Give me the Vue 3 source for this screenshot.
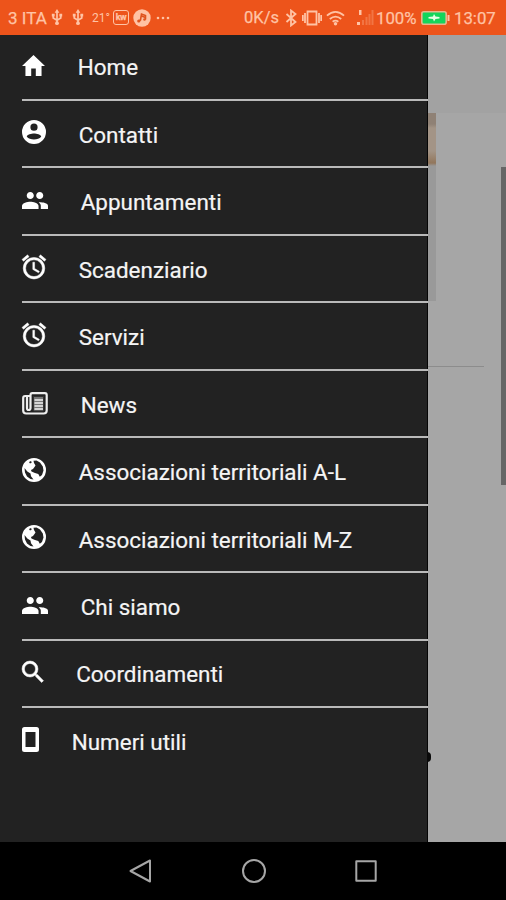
<script setup>
const icons = {
  home: { w: 23, h: 21, box: '2 3 20 17', d: 'M10 20v-6h4v6h5v-8h3L12 3 2 12h3v8z' },
  contact: { w: 24, h: 24, box: '2 2 20 20', d: 'M12 2a10 10 0 1 0 0 20 10 10 0 0 0 0-20zm0 3a3 3 0 1 1 0 6 3 3 0 0 1 0-6zm0 13.200c-2.500 0-4.700-.7-6-2.220.03-1.990 4-2.780 6-2.780 1.990 0 5.970.79 6 2.780-1.300 1.520-3.500 2.220-6 2.220z' },
  people: { w: 26, h: 17, box: '32 112 448 288', low: true, d: 'M337.454 232c33.599 0 61.092-27.002 61.092-60 0-32.997-27.493-60-61.092-60s-61.09 27.003-61.09 60c0 32.998 27.491 60 61.09 60zm-162.908 0c33.599 0 61.09-27.002 61.09-60 0-32.997-27.491-60-61.09-60s-61.092 27.003-61.092 60c0 32.998 27.493 60 61.092 60zm0 44C126.688 276 32 298.998 32 346v54h285.091v-54c0-47.002-94.689-70-142.545-70zm162.908 11.003c-6.105 0-10.325 0-17.454.997 23.426 17.003 36 28 36 58v54h124v-54c0-47.002-94.688-58.997-142.546-58.997z' },
  alarm: { w: 24, h: 24, box: '2 2 20 20', bold: true, d: 'M22 5.72l-4.6-3.86-1.29 1.53 4.6 3.86L22 5.72zM7.88 3.39L6.6 1.86 2 5.71l1.29 1.53 4.59-3.85zM12.5 8H11v6l4.75 2.85.75-1.23-4-2.37V8zM12 4a9 9 0 1 0 0 18 9 9 0 0 0 0-18zm0 16a7 7 0 1 1 0-14 7 7 0 0 1 0 14z' },
  globe: { w: 24, h: 24, box: '0 0 24 24', d: 'M12 0a12 12 0 1 0 0 24 12 12 0 0 0 0-24zM11.500 2.800l3-.2 3.500 2 2.800 4 .7 4-1.500 4.500-2.200 1.600-1.500-2.700-3.300-1-3.500-1.500-.5-1.500 2-1 1.500-2 1-1.500-1.500-2.500zM2.500 10l2.800 3.500 3.200 2 .5 2.700 2.500 3.200-3-.5-3.500-2.500-2-4zM7 4l2-1 .8 1.500L8 5.500z' },
  search: { w: 21.5, h: 21.5, box: '3 3 17.5 17.5', bold: true, d: 'M15.5 14h-.79l-.28-.27A6.47 6.47 0 0 0 16 9.5 6.5 6.5 0 1 0 9.5 16c1.61 0 3.09-.59 4.23-1.57l.27.28v.79l5 4.99L20.49 19l-4.99-5zm-6 0a4.5 4.5 0 1 1 0-9 4.5 4.5 0 0 1 0 9z' },
  phone: { w: 17, h: 25, box: '0 0 17 25', d: 'M2.5 0h12A2.5 2.5 0 0 1 17 2.5v20a2.5 2.5 0 0 1-2.500 2.500h-12A2.500 2.500 0 0 1 0 22.500v-20A2.500 2.500 0 0 1 2.500 0zM3.500 5v15h10V5z' },
}
const items = [
  { label: 'Home', icon: 'home' },
  { label: 'Contatti', icon: 'contact' },
  { label: 'Appuntamenti', icon: 'people' },
  { label: 'Scadenziario', icon: 'alarm' },
  { label: 'Servizi', icon: 'alarm' },
  { label: 'News', icon: 'news' },
  { label: 'Associazioni territoriali A-L', icon: 'globe' },
  { label: 'Associazioni territoriali M-Z', icon: 'globe' },
  { label: 'Chi siamo', icon: 'people' },
  { label: 'Coordinamenti', icon: 'search' },
  { label: 'Numeri utili', icon: 'phone' },
]
</script>

<template>
  <div class="screen">
    <header class="status">
      <span class="carrier">3 ITA</span>
      <svg v-for="n in 2" :key="n" class="usb" viewBox="0 0 12 18"><path d="M6 2v13M2 6v3.500l4 2.500 4-2.500V6" fill="none" stroke="currentColor" stroke-width="1.800" /><path d="M6 0l2.500 4h-5zM.5 5h3v3h-3zM8.500 5h3v3h-3z" /><circle cx="6" cy="15" r="2" /></svg>
      <span class="temp">21°</span>
      <span class="kw">kw</span>
      <svg class="disc" viewBox="0 0 18 18"><circle cx="9" cy="9" r="8.700" /><path d="M5 12.500l2.500-1.500 1-6 4 1.500v4M8.500 7l4 1.500" class="note" /><circle cx="5.800" cy="12" r="1.600" class="dot" /><circle cx="11.500" cy="10.500" r="1.300" class="dot" /></svg>
      <svg class="more" viewBox="0 0 14 4"><circle cx="2" cy="2" r="1.300" /><circle cx="7" cy="2" r="1.300" /><circle cx="12" cy="2" r="1.300" /></svg>
      <span class="spacer"></span>
      <span class="speed">0K/s</span>
      <svg class="bt" viewBox="0 0 12 18"><path d="M1.500 5l9 8L6 16.500v-15L10.500 5l-9 8" fill="none" stroke="currentColor" stroke-width="1.800" /></svg>
      <svg class="vib" viewBox="0 0 20 18"><path d="M5.500 2.500h9v13h-9zM3 4v10M17 4v10M.8 6v6M19.200 6v6" fill="none" stroke="currentColor" stroke-width="1.800" /></svg>
      <svg class="wifi" viewBox="0 0 20 16"><path d="M1 5.500q9-8 18 0M4 9q6-5 12 0M7 12q3-2.500 6 0" fill="none" stroke="currentColor" stroke-width="1.900" /><circle cx="10" cy="14" r="1.800" /></svg>
      <svg class="signal" viewBox="0 0 17 17"><path d="M2 1h2.500v5H2zM0 13h3v3H0z" /><path d="M5 11h2v5H5zM8.500 8h2v8h-2zM11.500 5h2v11h-2zM14.500 1h2v15h-2z" opacity=".3" /></svg>
      <span class="pct">100%</span>
      <svg class="battery" viewBox="0 0 29 14"><rect x=".8" y=".8" width="24.400" height="12.400" rx="2" class="cell" /><path d="M26.500 4h2v6h-2z" /><path d="M7.500 6l4.500-.5 1-2.500 1.500 2.500 4 .5v1.500l-4 .5-1.500 2.500L12 8l-4.500-.5z" class="bolt" /></svg>
      <span class="clock">13:07</span>
    </header>

    <main class="body">
      <nav class="drawer">
        <a v-for="item in items" :key="item.label" class="item">
          <svg v-if="item.icon === 'news'" class="icon low" width="26" height="23" viewBox="0 0 26 23">
            <path d="M8.500 4H3.200Q1.200 4 1.200 6v12.500q0 3 3 3h17.500q3 0 3-3V3q0-1.800-1.800-1.800H10.300Q8.500 1.200 8.500 3v13q0 2-1.800 2T5 16V4" class="frame" />
            <path d="M11.500 4.500h10v14.500h-10z" class="copy" />
            <path d="M12.500 8h8.500M12.500 11h8.500M12.500 14h8.500M12.500 17h8.500" class="lines" />
          </svg>
          <svg v-else class="icon" :class="{ bold: icons[item.icon].bold, low: icons[item.icon].low }" :width="icons[item.icon].w" :height="icons[item.icon].h" :viewBox="icons[item.icon].box" preserveAspectRatio="none"><path :d="icons[item.icon].d" fill-rule="evenodd" /></svg>
          <span class="label">{{ item.label }}</span>
        </a>
      </nav>
      <section class="page">
        <div class="toolbar"></div>
        <div class="photo"></div>
        <div class="rule"></div>
        <span class="bullet"></span>
        <div class="scrollbar"></div>
      </section>
    </main>

    <footer class="navbar">
      <svg viewBox="0 0 26 26"><path d="M22 2.500v21L2.500 13z" /></svg>
      <svg viewBox="0 0 26 26"><circle cx="13" cy="13" r="11" /></svg>
      <svg viewBox="0 0 26 26"><rect x="3.300" y="3.300" width="19.400" height="19.400" /></svg>
    </footer>
  </div>
</template>

<style>
body { margin: 0; background: #000; }
</style>

<style scoped>
.screen { width: 506px; height: 900px; display: flex; flex-direction: column; overflow: hidden; font-family: Roboto, "Liberation Sans", sans-serif; }
.status { box-sizing: border-box; height: 34.500px; flex: none; display: flex; align-items: center; padding: 1px 10px 0 8px; background: #ed541b; color: #ffc3a5; font-size: 17px; white-space: nowrap; -webkit-text-stroke: .25px; }
.status svg { flex: none; fill: currentColor; }
.carrier { width: 43px; }
.usb { width: 12px; height: 17px; margin-right: 9px; }
.temp { width: 21px; font-size: 12px; margin-left: -1px; -webkit-text-stroke: 0; }
.kw { box-sizing: border-box; width: 16px; height: 15px; border: 1.500px solid; border-radius: 3px; font-size: 9px; font-weight: 700; line-height: 12px; text-align: center; letter-spacing: -.5px; }
.disc { width: 18px; height: 18px; margin-left: 4px; }
.note { fill: none; stroke: #df541f; stroke-width: 1.600; }
.dot { fill: #df541f; }
.more { width: 14px; height: 4px; margin-left: 5px; }
.spacer { flex: 1; }
.speed { width: 41px; font-size: 16.500px; }
.bt { width: 12px; height: 18px; }
.vib { width: 20px; height: 18px; margin-left: 5px; }
.wifi { width: 19px; height: 16px; margin-left: 4px; }
.signal { width: 17px; height: 17px; margin-left: 12px; }
.pct { width: 45px; margin-left: 2px; font-size: 16.800px; }
.battery { width: 29px; height: 14px; }
.cell { fill: #13d55b; stroke: #e9b58d; stroke-width: 1.600; }
.bolt { fill: #e5ffe4; }
.clock { margin-left: 4px; width: 42px; font-size: 16.800px; }

.body { height: 807.500px; flex: none; display: flex; background: #a6a6a6; }
.drawer { box-sizing: border-box; width: 428px; flex: none; padding-left: 22.300px; background: #222; border-right: 1px solid #050505; }
.item { box-sizing: border-box; height: 67.480px; display: flex; align-items: center; margin-right: -1px; color: #f5f5f5; border-bottom: 2px solid #bababa; }
.item:first-child { height: 66.500px; }
.item:first-child .label { padding-top: 0; }
.item:last-child { border-bottom: 0; height: 66px; }
.icon { flex: none; fill: #fff; margin-right: 32.400px; margin-bottom: 3px; }
.low { margin-bottom: 1px; }
.bold { stroke: #fff; stroke-width: .4; overflow: visible; }
.label { font-size: 22.450px; line-height: 30px; white-space: nowrap; padding-top: 2px; -webkit-text-stroke: .2px; }
.frame { fill: none; stroke: #eee; stroke-width: 2.200; }
.copy { fill: #777; stroke: #333; stroke-width: 1; }
.lines { stroke: #d4d4d4; stroke-width: 2; }

.page { flex: 1; position: relative; display: flex; flex-direction: column; }
.toolbar { height: 78px; background: #a2a2a2; }
.photo { width: 8px; height: 188px; background: linear-gradient(#8f8175 0 11px, #a39486 15px 38px, #92765c 50px, #999 53px 100%); }
.rule { width: 56px; height: 1px; margin-top: 65.500px; background: #8c8c8c; }
.bullet { position: absolute; left: -1px; top: 717.500px; width: 4px; height: 10px; border-radius: 0 4px 4px 0; background: #0a0a0a; }
.scrollbar { position: absolute; right: 0; top: 132px; width: 5px; height: 318px; background: #666; }

.navbar { flex: 1; display: flex; align-items: center; gap: 86.500px; padding-left: 128.300px; background: #000; }
.navbar svg { width: 26px; height: 26px; flex: none; fill: none; stroke: #a6a6a6; stroke-width: 2; stroke-linejoin: round; }
</style>
